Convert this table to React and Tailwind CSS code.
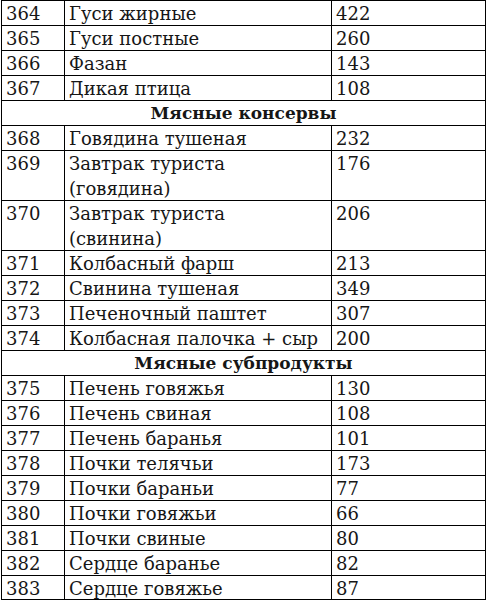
import React from "react";

const rows = [
  { n: "364", name: ["Гуси жирные"], v: "422" },
  { n: "365", name: ["Гуси постные"], v: "260" },
  { n: "366", name: ["Фазан"], v: "143" },
  { n: "367", name: ["Дикая птица"], v: "108" },
  { h: "Мясные консервы" },
  { n: "368", name: ["Говядина тушеная"], v: "232" },
  { n: "369", name: ["Завтрак туриста", "(говядина)"], v: "176" },
  { n: "370", name: ["Завтрак туриста", "(свинина)"], v: "206" },
  { n: "371", name: ["Колбасный фарш"], v: "213" },
  { n: "372", name: ["Свинина тушеная"], v: "349" },
  { n: "373", name: ["Печеночный паштет"], v: "307" },
  { n: "374", name: ["Колбасная палочка + сыр"], v: "200" },
  { h: "Мясные субпродукты" },
  { n: "375", name: ["Печень говяжья"], v: "130" },
  { n: "376", name: ["Печень свиная"], v: "108" },
  { n: "377", name: ["Печень баранья"], v: "101" },
  { n: "378", name: ["Почки телячьи"], v: "173" },
  { n: "379", name: ["Почки бараньи"], v: "77" },
  { n: "380", name: ["Почки говяжьи"], v: "66" },
  { n: "381", name: ["Почки свиные"], v: "80" },
  { n: "382", name: ["Сердце баранье"], v: "82" },
  { n: "383", name: ["Сердце говяжье"], v: "87", last: true },
];

export default function App() {
  return (
    <div
      className="w-[487px] h-[600px] overflow-hidden bg-white text-[#161616]"
      style={{ fontFamily: '"DejaVu Serif", "Liberation Serif", serif' }}
    >
      <div className="ml-px w-[485px] border-l border-t border-black text-[18px] leading-[25px]">
        {rows.map((r, i) =>
          r.h ? (
            <div
              key={i}
              className="h-[25px] border-b border-r border-black text-center text-[17px] font-bold"
            >
              {r.h}
            </div>
          ) : (
            <div
              key={i}
              className={
                "flex border-b border-black " +
                (r.name.length > 1 ? "h-[50px]" : r.last ? "h-[24px]" : "h-[25px]")
              }
            >
              <div className="w-[63px] shrink-0 border-r border-black pl-[4px]">{r.n}</div>
              <div className="w-[267px] shrink-0 border-r border-black pl-[4px]">
                {r.name.map((t, j) => (
                  <div key={j}>{t}</div>
                ))}
              </div>
              <div className="w-[154px] shrink-0 border-r border-black pl-[4px]">{r.v}</div>
            </div>
          )
        )}
      </div>
    </div>
  );
}
